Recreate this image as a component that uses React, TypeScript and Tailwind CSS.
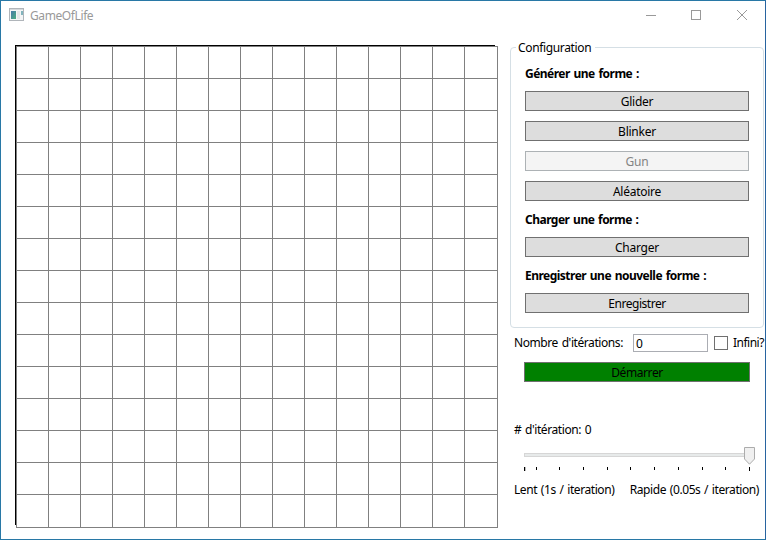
import React from "react";

const CELLS = Array.from({ length: 225 }, (_, i) => i);
const TICKS = [0, 12, 35, 59, 83, 106, 130, 154, 178, 201, 225];

function Label({ children, className = "" }: { children: React.ReactNode; className?: string }) {
  return <div className={`h-4 leading-4 whitespace-nowrap ${className}`}>{children}</div>;
}

function Button({ children, disabled = false }: { children: React.ReactNode; disabled?: boolean }) {
  return (
    <button
      disabled={disabled}
      className={`flex h-5 w-56 shrink-0 items-center justify-center border pt-px leading-4 tracking-[-0.25px] ${
        disabled ? "border-[#adb2b5] bg-[#f4f4f4] text-[#838383]" : "border-[#707070] bg-[#dddddd]"
      }`}
    >
      {children}
    </button>
  );
}

function TitleBar() {
  return (
    <header className="flex h-[30px] shrink-0 items-start pl-2">
      <svg width="15" height="13" viewBox="0 0 15 13" className="mt-[7px] shrink-0">
        <defs>
          <linearGradient id="pane" x1="0" y1="0" x2="1" y2="1">
            <stop offset="0" stopColor="#4779a8" />
            <stop offset="1" stopColor="#4cae80" />
          </linearGradient>
        </defs>
        <rect x=".5" y=".5" width="14" height="12" fill="#f4f5f6" stroke="#b0b5ba" />
        <path d="M1 1.5h13" stroke="#d5d9dc" />
        <rect x="2" y="3" width="5" height="8" fill="url(#pane)" />
        <rect x="8" y="3" width="3" height="8" fill="#e5e7e8" />
        <rect x="12" y="3" width="2" height="4" fill="#82b4bd" />
      </svg>
      <span className="ml-[6px] mt-[7px] leading-4 tracking-[-0.4px] text-[#999999]">GameOfLife</span>
      <svg width="104" height="12" viewBox="0 0 104 12" className="mr-4 mt-2 ml-auto shrink-0" fill="none" stroke="#999999">
        <path d="M1 6.5h10" />
        <rect x="46.5" y="1.5" width="9" height="9" />
        <path d="M92 1l10 10M102 1L92 11" />
      </svg>
    </header>
  );
}

function Board() {
  return (
    <div className="mt-[14px] ml-[14px] h-[483px] w-[483px] shrink-0">
      <div className="h-px w-[480px] bg-black" />
      <div className="flex">
        <div className="h-[479px] w-px bg-black" />
        <div className="grid h-[482px] w-[482px] grid-cols-[repeat(14,32px)_33px] grid-rows-[repeat(14,32px)_33px] border-r border-b border-[#808080]">
          {CELLS.map((i) => (
            <div key={i} className="border-t border-l border-[#808080]" />
          ))}
        </div>
      </div>
    </div>
  );
}

function Configuration() {
  const heading = "font-bold tracking-[-0.52px] [word-spacing:1.1px]";
  return (
    <fieldset className="mt-[9px] flex h-[288px] w-[254px] flex-col rounded-[4px] border border-[#d5dfe5] pl-[14px]">
      <legend className="-ml-[9px] h-[15px] pr-1 pl-[2px] leading-4 tracking-[-0.35px]">Configuration</legend>
      <Label className={`mt-[11px] ${heading}`}>Générer une forme :</Label>
      <div className="mt-[9px] flex flex-col gap-[10px]">
        <Button>Glider</Button>
        <Button>Blinker</Button>
        <Button disabled>Gun</Button>
        <Button>Aléatoire</Button>
      </div>
      <Label className={`mt-[11px] mb-[9px] ${heading}`}>Charger une forme :</Label>
      <Button>Charger</Button>
      <Label className={`mt-[11px] mb-[9px] ${heading}`}>Enregistrer une nouvelle forme :</Label>
      <Button><span className="tracking-[-0.45px]">Enregistrer</span></Button>
    </fieldset>
  );
}

function SpeedSlider() {
  return (
    <div className="mt-[9px] ml-[14px] w-[232px]">
      <div className="flex h-[18px] items-start">
        <div className="mt-[6px] h-1 w-[220px] border border-r-0 border-[#d6d6d6] bg-[#e7eaea]" />
        <svg width="11" height="18" viewBox="0 0 11 18" className="shrink-0">
          <path d="M.5 .5h10v11.5l-5 5.2L.5 12z" fill="#f0f0f0" stroke="#acacac" />
        </svg>
      </div>
      <svg width="227" height="4" viewBox="0 0 227 4" className="mt-[2px]" shapeRendering="crispEdges">
        {TICKS.map((x) => (
          <rect key={x} x={x} width="1" height={x === 0 || x === 225 ? 4 : 3} fill="#000000" />
        ))}
        <rect x="1" width="1" height="4" fill="#bbbbbb" />
      </svg>
    </div>
  );
}

export default function App() {
  return (
    <div className="flex h-[540px] w-[766px] flex-col overflow-hidden border border-[#2878a6] border-r-[#2864a0] bg-white font-['Noto_Sans','Open_Sans',sans-serif] text-[12px] text-black">
      <TitleBar />
      <main className="flex min-h-0 flex-1">
        <Board />
        <section className="ml-3 w-[254px] shrink-0">
          <Configuration />
          <div className="mt-[6px] flex h-[18px] items-center pl-1">
            <Label className="w-[119px] shrink-0 tracking-[-0.42px] [word-spacing:1px]">Nombre d'itérations:</Label>
            <div className="flex h-[18px] w-[75px] shrink-0 items-center border border-[#abadb3] pt-px pl-[2px]">0</div>
            <div className="ml-[6px] h-[14px] w-[14px] shrink-0 border border-[#707070]" />
            <Label className="ml-[5px] tracking-[-0.5px]">Infini?</Label>
          </div>
          <button className="mt-[10px] ml-[14px] flex h-5 w-[226px] items-center justify-center border border-[#707070] bg-[#008000] pt-px leading-4 tracking-[-0.4px]">
            Démarrer
          </button>
          <Label className="mt-10 ml-1 tracking-[-0.42px] [word-spacing:1px]"># d'itération: 0</Label>
          <SpeedSlider />
          <div className="mt-[11px] ml-1 flex justify-between pr-[5px]">
            <Label className="tracking-[-0.42px] [word-spacing:1px]">Lent (1s / iteration)</Label>
            <Label className="tracking-[-0.42px] [word-spacing:1px]">Rapide (0.05s / iteration)</Label>
          </div>
        </section>
      </main>
    </div>
  );
}
